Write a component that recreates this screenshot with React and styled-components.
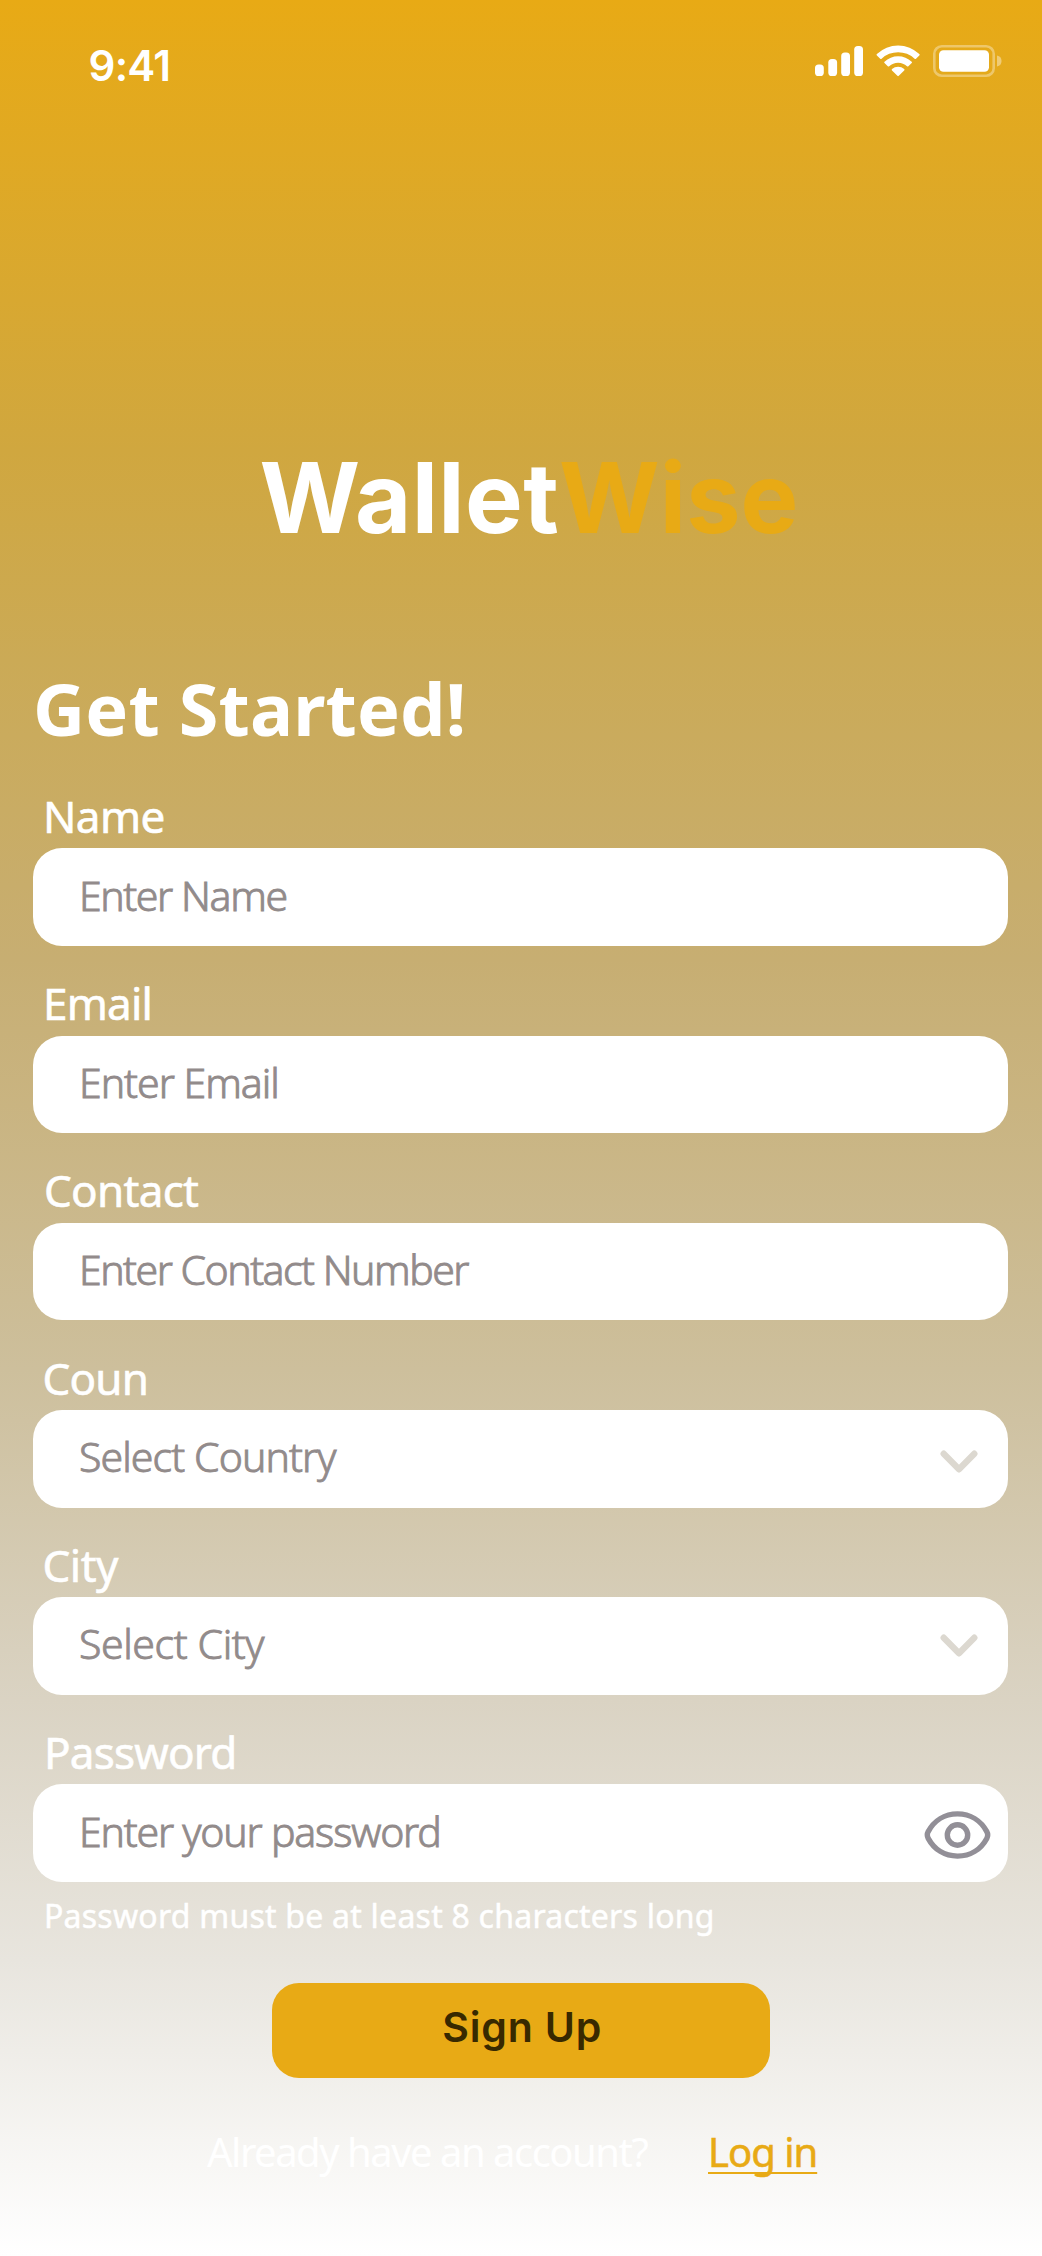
import React from "react";
import styled, { createGlobalStyle } from "styled-components";

const GlobalStyle = createGlobalStyle`
  * { box-sizing: border-box; }
  body { margin: 0; }
`;

const noto = `"Noto Sans", "Open Sans", sans-serif`;
const inter = `"Inter", "Liberation Sans", sans-serif`;

const Screen = styled.main`
  display: flex;
  flex-direction: column;
  width: 1042px;
  height: 2256px;
  overflow: hidden;
  color: #fff;
  font-family: ${noto};
  white-space: nowrap;
  background: linear-gradient(
    180deg,
    #e8aa15 0,
    #d0a73f 450px,
    #cbaa56 660px,
    #c7ae72 960px,
    #cdbf9c 1370px,
    #dad3c3 1700px,
    #e8e5de 1960px,
    #ffffff 2256px
  );
`;

const StatusBar = styled.header`
  display: flex;
  justify-content: space-between;
  align-items: flex-start;
  height: 438.2px;
  padding: 40.7px 40px 0 88.5px;
`;

const Time = styled.span`
  font: 600 42px/50px ${inter};
  letter-spacing: ${(p) => p.$track}px;
`;

const StatusIcons = styled.div`
  display: flex;
  padding-top: 3.3px;
`;

const Brand = styled.div`
  display: flex;
  height: 120px;
  padding-left: 259.5px;
  font: 700 97px/120px ${inter};
`;

const BrandPart = styled.span`
  color: ${(p) => p.$color};
  width: ${(p) => p.$width}px;
  letter-spacing: ${(p) => p.$track}px;
`;

const Title = styled.h1`
  margin: 99.8px 0 28px 33px;
  font: 700 72px/100px ${noto};
  letter-spacing: ${(p) => p.$track}px;
`;

const Form = styled.form`
  display: flex;
  flex-direction: column;
  gap: 27.2px;
  padding: 0 34px 0 33px;
`;

const Field = styled.label`
  display: flex;
  flex-direction: column;
  gap: 2.5px;
`;

const Label = styled.span`
  padding-left: ${(p) => p.$inset}px;
  font-size: 44px;
  font-weight: 400;
  line-height: 60px;
  letter-spacing: ${(p) => p.$track}px;
  -webkit-text-stroke: 0.6px currentColor;
`;

const Control = styled.span`
  display: flex;
  align-items: center;
  justify-content: space-between;
  height: 97.5px;
  padding: 0 ${(p) => p.$right}px 0 46px;
  border-radius: 29px;
  background: #fff;
`;

const Placeholder = styled.span`
  padding-bottom: 5px;
  color: #928b8b;
  font-size: 41px;
  font-weight: 300;
  line-height: 56px;
  letter-spacing: ${(p) => p.$track}px;
  -webkit-text-stroke: 0.9px currentColor;
`;

const Hint = styled.p`
  margin: 12.1px 0 45.4px 44px;
  font-size: 32px;
  font-weight: 400;
  line-height: 44px;
  letter-spacing: ${(p) => p.$track}px;
  -webkit-text-stroke: 0.5px currentColor;
`;

const SignUp = styled.button`
  width: 497.5px;
  height: 94.7px;
  margin-left: 272px;
  padding: 0 0 7px 3px;
  border: 0;
  border-radius: 27px;
  background: #e8aa15;
  color: #382900;
  font: 600 41px/50px ${inter};
  letter-spacing: ${(p) => p.$track}px;
`;

const Footer = styled.footer`
  display: flex;
  margin-top: 46.3px;
  padding-left: 207px;
  font-size: 40px;
  line-height: 56px;
`;

const Question = styled.span`
  width: 501px;
  letter-spacing: ${(p) => p.$track}px;
`;

const LogIn = styled.a`
  color: #e8aa15;
  letter-spacing: ${(p) => p.$track}px;
  -webkit-text-stroke: 0.6px currentColor;
  text-decoration: underline;
  text-decoration-thickness: 2px;
  text-underline-offset: 5px;
  text-decoration-skip-ink: none;
`;

const ChevronIcon = styled.svg`
  margin-top: ${(p) => p.$shift}px;
`;

const Chevron = ({ shift }) => (
  <ChevronIcon $shift={shift} width="38" height="24" viewBox="0 0 38 24">
    <path d="M3.7 3.7 19 19.3 34.3 3.7" fill="none" stroke="#dcd8d0" strokeWidth="6.4" strokeLinecap="round" strokeLinejoin="round" />
  </ChevronIcon>
);

const EyeIcon = styled.svg`
  margin-top: 4px;
`;

const Eye = () => (
  <EyeIcon width="67" height="48" viewBox="0 0 67 48" fill="none" stroke="#928f97" strokeWidth="5.4">
    <path d="M4.2 20.6C10 9.800 20.600 2.900 33.500 2.900S57 9.800 62.800 20.600Q64.600 24 62.800 27.400C57 38.200 46.400 45.100 33.500 45.100S10 38.200 4.200 27.400Q2.400 24 4.200 20.600Z" />
    <circle cx="33.500" cy="24" r="10.200" />
  </EyeIcon>
);

const SystemIcons = () => (
  <svg width="187" height="34" viewBox="815 44 187 34" fill="#fff">
    <rect x="815" y="64.500" width="8.800" height="11.500" rx="3.600" />
    <rect x="828.300" y="59" width="8.800" height="17" rx="3.600" />
    <rect x="841.200" y="52.500" width="8.800" height="23.500" rx="3.600" />
    <rect x="854.200" y="46" width="8.800" height="30" rx="3.600" />
    <path d="M876.900 54.100A30.500 30.500 0 0 1 919.300 54.100Q920 54.800 919.300 55.500L916 58.700Q915.300 59.300 914.600 58.700A24 24 0 0 0 881.600 58.700Q880.900 59.300 880.200 58.700L876.900 55.500Q876.200 54.800 876.900 54.100Z" />
    <path d="M884.500 61.700A19.700 19.700 0 0 1 911.700 61.700Q912.400 62.400 911.700 63.100L908.400 66.200Q907.700 66.800 907 66.200A13 13 0 0 0 889.200 66.200Q888.500 66.800 887.800 66.200L884.500 63.100Q883.800 62.400 884.500 61.700Z" />
    <path d="M892 69.100A9.300 9.300 0 0 1 904.200 69.100Q904.900 69.800 904.200 70.500L898.800 75.800Q898.100 76.500 897.400 75.800L892 70.500Q891.300 69.800 892 69.100Z" />
    <rect x="934.300" y="46.300" width="59.400" height="29.400" rx="7.500" fill="none" stroke="#fff" strokeOpacity=".35" strokeWidth="2.600" />
    <rect x="939" y="50.300" width="50" height="21.400" rx="4.500" />
    <path d="M997 55.500A5.600 5.600 0 0 1 997 66.500Z" opacity=".4" />
  </svg>
);

const fields = [
  { label: "Name", inset: 10, track: -0.6, text: "Enter Name", textTrack: -1.4 },
  { label: "Email", inset: 10, track: -0.8, text: "Enter Email", textTrack: -1 },
  { label: "Contact", inset: 11, track: -0.7, text: "Enter Contact Number", textTrack: -1.5 },
  { label: "Coun", inset: 9.5, track: -0.8, text: "Select Country", textTrack: -0.9, icon: <Chevron shift={6} />, right: 30 },
  { label: "City", inset: 9.5, track: -0.5, text: "Select City", textTrack: -0.4, icon: <Chevron shift={1} />, right: 30 },
  { label: "Password", inset: 11, track: -0.8, text: "Enter your password", textTrack: -1.2, icon: <Eye />, right: 17 },
];

export default function App() {
  return (
    <Screen>
      <GlobalStyle />
      <StatusBar>
        <Time $track={-0.7}>9:41</Time>
        <StatusIcons><SystemIcons /></StatusIcons>
      </StatusBar>
      <Brand>
        <BrandPart $color="#fff" $width={299.5} $track={0.4}>Wallet</BrandPart>
        <BrandPart $color="#e8aa15" $width={260} $track={0.1}>Wise</BrandPart>
      </Brand>
      <Title $track={0.15}>Get Started!</Title>
      <Form>
        {fields.map((f) => (
          <Field key={f.label}>
            <Label $inset={f.inset} $track={f.track}>{f.label}</Label>
            <Control $right={f.right || 30}>
              <Placeholder $track={f.textTrack}>{f.text}</Placeholder>
              {f.icon}
            </Control>
          </Field>
        ))}
      </Form>
      <Hint $track={0.24}>Password must be at least 8 characters long</Hint>
      <SignUp type="button" $track={0.8}>Sign Up</SignUp>
      <Footer>
        <Question $track={-1.5}>Already have an account?</Question>
        <LogIn $track={-1}>Log in</LogIn>
      </Footer>
    </Screen>
  );
}
